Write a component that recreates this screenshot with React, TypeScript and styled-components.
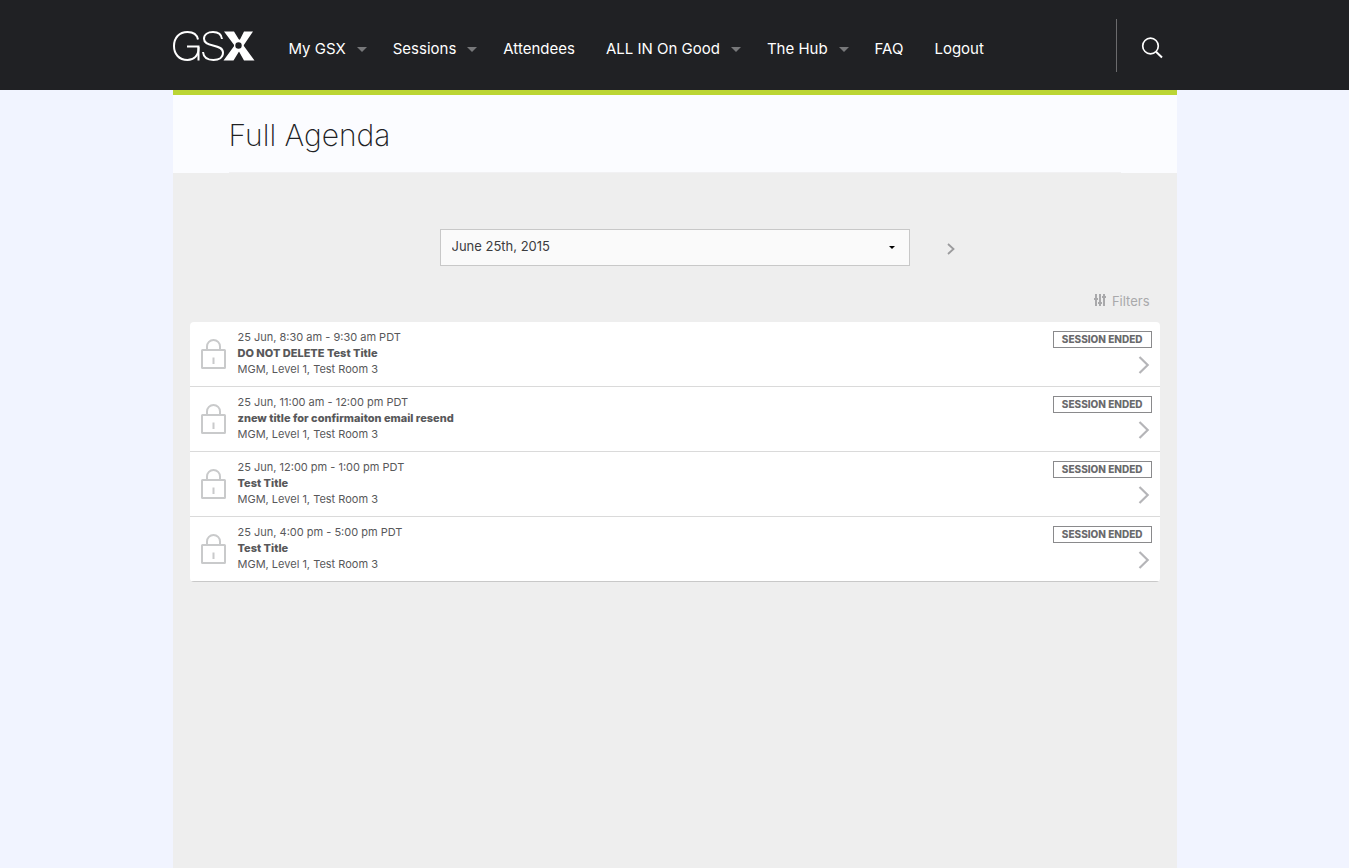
import React from 'react';
import styled, { createGlobalStyle } from 'styled-components';

const GlobalStyle = createGlobalStyle`
  *, *::before, *::after { box-sizing: border-box; }
  body {
    margin: 0;
    background: #f1f4ff;
    color: #58585a;
    font-family: Inter, "Liberation Sans", sans-serif;
  }
  button, select { font: inherit; color: inherit; }
  a { color: inherit; text-decoration: none; }
`;

const Page = styled.div`
  display: flex;
  flex-direction: column;
  min-height: 100vh;
`;

const Header = styled.header`
  background: #202124;
`;

const HeaderInner = styled.div`
  display: flex;
  align-items: center;
  max-width: 1004px;
  height: 90px;
  margin: 0 auto;
`;

const LogoLink = styled.a`
  display: block;
  height: 32px;
  margin: 2px 34px 0 0;
`;

const Nav = styled.nav`
  flex: 1;
`;

const NavList = styled.ul`
  display: flex;
  gap: 31px;
  margin: 0;
  padding: 8px 0 0;
  list-style: none;
`;

const NavItem = styled.li<{ $menu?: boolean }>`
  margin-right: ${(p) => (p.$menu ? '-5px' : '0')};
`;

const NavLink = styled.a`
  display: flex;
  align-items: center;
  gap: 11px;
  color: #fff;
  font-size: 15px;
  line-height: 20px;
  white-space: nowrap;
`;

const SearchArea = styled.div`
  display: flex;
  align-items: center;
  height: 53px;
  padding: 6px 13px 0 23px;
  border-left: 1px solid #6b6b6d;
`;

const IconButton = styled.button`
  display: flex;
  padding: 0;
  border: 0;
  background: none;
  cursor: pointer;
`;

const Main = styled.main`
  flex: 1;
  display: flex;
  flex-direction: column;
  width: 100%;
  max-width: 1004px;
  margin: 0 auto;
  border-top: 5px solid #bbd534;
  background: #eee;
`;

const TitleBar = styled.div`
  padding: 0 56px;
  background: #fbfcff;
`;

const Title = styled.h1`
  margin: 0;
  padding: 20px 0 17px;
  border-bottom: 1px solid #f1f1f3;
  color: #202124;
  font-size: 30px;
  font-weight: 200;
  line-height: 40px;
`;

const Agenda = styled.section`
  padding: 56px 17px;
`;

const DateRow = styled.div`
  display: grid;
  grid-template-columns: 1fr 470px 1fr;
  align-items: center;
`;

const SelectWrap = styled.div`
  display: grid;
  grid-column: 2;
  align-items: center;

  & > * { grid-area: 1 / 1; }
  & > svg { justify-self: end; margin-right: 15px; pointer-events: none; }
`;

const DateSelect = styled.select`
  appearance: none;
  width: 100%;
  height: 37px;
  padding: 0 32px 3px 11px;
  border: 1px solid #c8c8c8;
  border-radius: 0;
  background: #fafafa;
  color: #3c3c3e;
  font-size: 13px;
`;

const NextDay = styled(IconButton)`
  justify-self: start;
  margin: 2px 0 0 37px;
`;

const Toolbar = styled.div`
  display: flex;
  justify-content: flex-end;
  padding: 25px 10px 11px;
`;

const FilterButton = styled(IconButton)`
  align-items: center;
  gap: 6px;
  color: #a9a9ab;
  font-size: 13px;
  line-height: 20px;
`;

const SessionList = styled.ul`
  margin: 0;
  padding: 0;
  overflow: hidden;
  border-radius: 4px;
  background: #fff;
  list-style: none;
`;

const Session = styled.li`
  border-bottom: 1px solid #dadada;

  &:last-child { border-bottom-color: #c8c8c8; }
`;

const SessionLink = styled.a`
  display: flex;
  align-items: flex-start;
  height: 64px;
  padding: 7px 8px 0 11px;
`;

const LockSlot = styled.span`
  display: flex;
  width: 37px;
  padding-top: 9px;
`;

const Details = styled.div`
  flex: 1;
  font-size: 11px;
  line-height: 16px;
`;

const SessionTitle = styled.h2`
  margin: 0;
  font-size: 11px;
  font-weight: 800;
  line-height: 16px;
`;

const Status = styled.div`
  display: flex;
  flex-direction: column;
  align-items: flex-end;
  gap: 8px;
  padding-top: 2px;

  & > svg { margin-right: 2px; }
`;

const Badge = styled.span`
  padding: 0 8px;
  border: 1px solid #8a8a8c;
  color: #6a6a6c;
  font-size: 10px;
  font-weight: 800;
  line-height: 15px;
`;

const Logo = () => (
  <svg width="82" height="32" viewBox="0 0 82 32" role="img" aria-label="GSX">
    <g fill="none" stroke="#fff" strokeWidth="2">
      <path d="M25 9.5C24 4.500 20 2 14.500 2 6 2 1 8 1 16s5 14 13.500 14C21 30 25.500 25.500 25.500 18.500V16.500H14" />
      <path d="M25.500 17V30.500" />
      <path d="M49 9C48.500 4.500 45 2 40 2c-5 0-9 2.500-9 6.800 0 4.200 3.500 5.500 9 6.700 6 1.300 10 2.800 10 7.300S46 30 40.500 30C34 30 30.500 27 30 22" />
    </g>
    <path
      fill="#fff"
      d="M51 1.500H61L66.500 10.500 71 1.500H80L70.500 15.500 81.500 30.500H71L66 21.500 60.500 30.500H50.500L61.500 15.500z"
    />
    <path d="M61 11.500a6.500 6.500 0 0 1 9.500 0v8a6.500 6.500 0 0 1-9.500 0z" fill="#fff" />
    <circle cx="65.500" cy="15.500" r="3.200" fill="#202124" />
  </svg>
);

const Caret = () => (
  <svg width="10" height="5" viewBox="0 0 10 5" aria-hidden="true">
    <path d="M0 0H10L5 5z" fill="#77787a" />
  </svg>
);

const SearchIcon = () => (
  <svg width="24" height="24" viewBox="0 0 24 24" fill="none" stroke="#fff" strokeWidth="1.700" aria-hidden="true">
    <circle cx="10.500" cy="10" r="7.800" />
    <path d="M16 15.700L22 21.500" strokeWidth="2" />
  </svg>
);

const SelectCaret = () => (
  <svg width="6" height="3" viewBox="0 0 6 3" aria-hidden="true">
    <path d="M0 0H6L3 3z" fill="#000" />
  </svg>
);

const NextIcon = () => (
  <svg width="8" height="12" viewBox="0 0 8 12" fill="none" stroke="#9b9b9d" strokeWidth="1.800" aria-hidden="true">
    <path d="M1 1L6.500 6 1 11" />
  </svg>
);

const FilterIcon = () => (
  <svg width="12" height="15" viewBox="0 0 12 15" stroke="#a9a9ab" strokeWidth="2" aria-hidden="true">
    <path d="M2 0V12M6 0V12M10 0V12" />
    <path d="M0 5H4M4 9H8M8 3H12" />
  </svg>
);

const LockIcon = () => (
  <svg width="25" height="31" viewBox="0 0 25 31" fill="none" stroke="#c9cacb" strokeWidth="2" aria-hidden="true">
    <rect x="1" y="12" width="23" height="18" rx="0.500" />
    <path d="M6 12V8.500a6.500 6.500 0 0 1 13 0V12" />
    <path d="M12.500 19.500V26" />
  </svg>
);

const RowArrow = () => (
  <svg width="12" height="18" viewBox="0 0 12 18" fill="none" stroke="#b5b5b8" strokeWidth="2.200" aria-hidden="true">
    <path d="M1.500 1L9.700 9 1.500 17" />
  </svg>
);

const navItems = [
  { label: 'My GSX', menu: true },
  { label: 'Sessions', menu: true },
  { label: 'Attendees' },
  { label: 'ALL IN On Good', menu: true },
  { label: 'The Hub', menu: true },
  { label: 'FAQ' },
  { label: 'Logout' },
];

const sessions = [
  { time: '25 Jun, 8:30 am - 9:30 am PDT', title: 'DO NOT DELETE Test Title' },
  { time: '25 Jun, 11:00 am - 12:00 pm PDT', title: 'znew title for confirmaiton email resend' },
  { time: '25 Jun, 12:00 pm - 1:00 pm PDT', title: 'Test Title' },
  { time: '25 Jun, 4:00 pm - 5:00 pm PDT', title: 'Test Title' },
];

export default function App() {
  return (
    <Page>
      <GlobalStyle />
      <Header>
        <HeaderInner>
          <LogoLink href="#home"><Logo /></LogoLink>
          <Nav aria-label="Main">
            <NavList>
              {navItems.map((item) => (
                <NavItem key={item.label} $menu={item.menu}>
                  <NavLink href="#menu">
                    {item.label}
                    {item.menu && <Caret />}
                  </NavLink>
                </NavItem>
              ))}
            </NavList>
          </Nav>
          <SearchArea>
            <IconButton type="button" aria-label="Search"><SearchIcon /></IconButton>
          </SearchArea>
        </HeaderInner>
      </Header>
      <Main>
        <TitleBar>
          <Title>Full Agenda</Title>
        </TitleBar>
        <Agenda>
          <DateRow>
            <SelectWrap>
              <DateSelect aria-label="Agenda date" defaultValue="25">
                <option value="25">June 25th, 2015</option>
              </DateSelect>
              <SelectCaret />
            </SelectWrap>
            <NextDay type="button" aria-label="Next day"><NextIcon /></NextDay>
          </DateRow>
          <Toolbar>
            <FilterButton type="button"><FilterIcon />Filters</FilterButton>
          </Toolbar>
          <SessionList>
            {sessions.map((session) => (
              <Session key={session.time}>
                <SessionLink href="#session">
                  <LockSlot><LockIcon /></LockSlot>
                  <Details>
                    <div>{session.time}</div>
                    <SessionTitle>{session.title}</SessionTitle>
                    <div>MGM, Level 1, Test Room 3</div>
                  </Details>
                  <Status>
                    <Badge>SESSION ENDED</Badge>
                    <RowArrow />
                  </Status>
                </SessionLink>
              </Session>
            ))}
          </SessionList>
        </Agenda>
      </Main>
    </Page>
  );
}
